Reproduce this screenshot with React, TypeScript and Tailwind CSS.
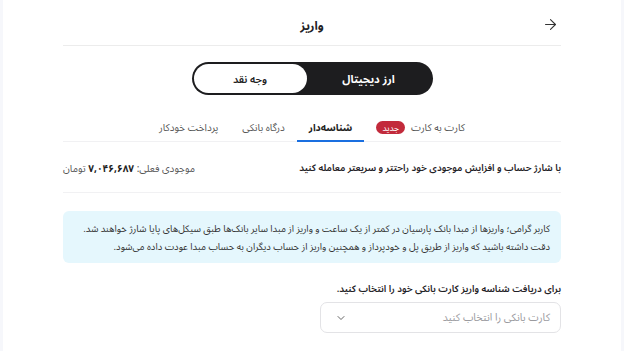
import React from "react";
import { ArrowRight, ChevronDown } from "lucide-react";

export default function App() {
  const font = { fontFamily: '"Noto Sans Arabic", "Noto Sans", "DejaVu Sans", sans-serif' };
  return (
    <div dir="rtl" className="w-[624px] h-[351px] overflow-hidden bg-[#f6f7fb] px-[3px] text-[#1f2226]" style={font}>
      <div className="h-full bg-white px-[60px]">
        <div className="relative flex h-[46px] items-center justify-center border-b border-[#ececec] pt-[8px]">
          <ArrowRight className="absolute right-[2px] top-[16px] h-[17px] w-[17px] text-[#333]" strokeWidth={1.5} />
          <span className="text-[12px] font-bold leading-[16px]">واریز</span>
        </div>

        <div className="mt-[16px] flex justify-center">
          <div className="flex h-[33px] w-[241px] rounded-full bg-[#1d1d1f] p-[2px]">
            <div className="flex flex-1 items-center justify-center pt-[2px] text-[11px] font-bold leading-[14px] text-white">ارز دیجیتال</div>
            <div className="flex w-[113px] items-center justify-center rounded-full bg-white pt-[2px] text-[10.5px] font-semibold leading-[14px] text-[#222]">وجه نقد</div>
          </div>
        </div>

        <div className="mt-[17px] flex h-[30px] justify-center border-b border-[#f1f1f3]">
          <div className="flex items-center gap-[6px] px-3 pt-[2px] text-[10px] text-[#555]">
            <span>کارت به کارت</span>
            <span className="rounded-full bg-[#c22a3b] px-[6px] pt-[1px] text-[8.5px] leading-[12px] text-white">جدید</span>
          </div>
          <div className="-mb-px flex items-center border-b-2 border-[#1a6fe0] px-3 pt-[3px] text-[10px] font-bold text-[#222]">شناسه‌دار</div>
          <div className="flex items-center px-3 pt-[2px] text-[10px] text-[#555]">درگاه بانکی</div>
          <div className="flex items-center px-3 pt-[2px] text-[10px] text-[#555]">پرداخت خودکار</div>
        </div>

        <div className="flex h-[51px] items-center justify-between border-b border-[#f1f1f3] pt-[2px]">
          <span className="text-[9.5px] font-semibold">با شارژ حساب و افزایش موجودی خود راحتتر و سریعتر معامله کنید</span>
          <span className="text-[10px] text-[#555]">
            موجودی فعلی:{" "}
            <span className="font-bold text-[#222]">۷,۰۴۶,۶۸۷</span> تومان
          </span>
        </div>

        <div className="mt-[18px] rounded-[6px] bg-[#e5f7fd] px-[11px] pb-[7px] pt-[9px] text-[9.5px] leading-[18px] text-[#333]">
          <p className="whitespace-nowrap">کاربر گرامی؛ واریزها از مبدا بانک پارسیان در کمتر از یک ساعت و واریز از مبدا سایر بانک‌ها طبق سیکل‌های پایا شارژ خواهند شد.</p>
          <p className="whitespace-nowrap">دقت داشته باشید که واریز از طریق پل و خودپرداز و همچنین واریز از حساب دیگران به حساب مبدا عودت داده می‌شود.</p>
        </div>

        <p className="mt-[18px] text-[9.5px] font-semibold leading-[16px]">برای دریافت شناسه واریز کارت بانکی خود را انتخاب کنید.</p>

        <div className="mt-[5px] flex h-[31px] w-[241px] items-center justify-between rounded-[7px] border border-[#e3e3e6] pl-[14px] pr-[10px]">
          <span className="pt-[2px] text-[10.5px] text-[#9a9a9e]">کارت بانکی را انتخاب کنید</span>
          <ChevronDown className="h-[12px] w-[12px] text-[#555]" strokeWidth={1.8} />
        </div>
      </div>
    </div>
  );
}
